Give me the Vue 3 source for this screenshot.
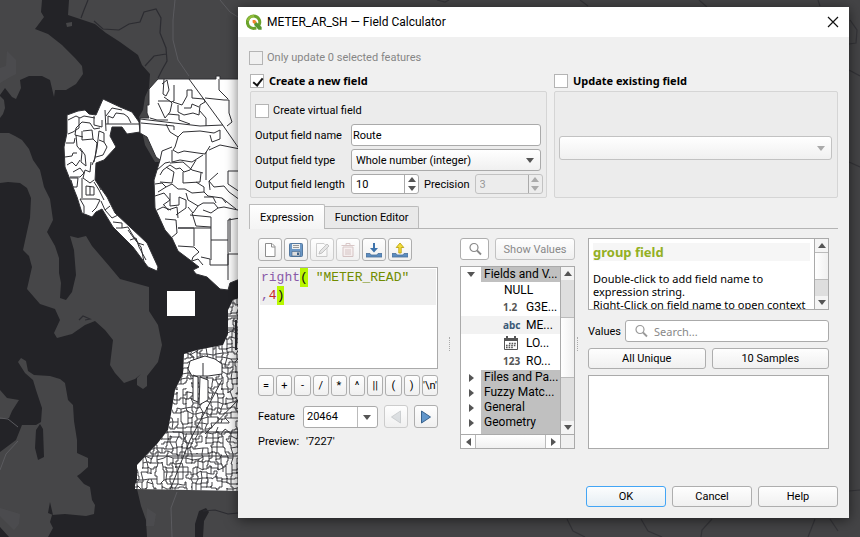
<script setup>
import { ref, computed } from 'vue'

const createNew = ref(true)
const virtual = ref(false)
const updateExisting = ref(false)
const fieldName = ref('Route')
const fieldType = ref('Whole number (integer)')
const fieldLength = ref(10)
const precision = ref(3)
const feature = ref('20464')
const tab = ref('expression')
const expression = ref('right( "METER_READ"\n,4)')
const valueSearch = ref('')

const operators = ['=', '+', '-', '/', '*', '^', '||', '(', ')', "'\\n'"]

const treeRows = [
  { label: 'Fields and V...', kind: 'branch', open: true },
  { label: 'NULL', kind: 'null' },
  { label: 'G3E...', kind: 'leaf', badge: '1.2' },
  { label: 'ME...', kind: 'leaf', badge: 'abc', active: true },
  { label: 'LO...', kind: 'leaf', badge: 'date' },
  { label: 'RO...', kind: 'leaf', badge: '123' },
  { label: 'Files and Pa...', kind: 'branch' },
  { label: 'Fuzzy Matc...', kind: 'branch' },
  { label: 'General', kind: 'branch' },
  { label: 'Geometry', kind: 'branch' }
]

/* Splits the expression into coloured pieces. */
const tokens = computed(() => {
  const parts = expression.value.match(/"[^"]*"|[A-Za-z_]+|\d+|[()]|[\s\S]/g) || []
  return parts.map((text) => {
    let type = 'plain'
    if (/^"/.test(text)) type = 'column'
    else if (/^[A-Za-z_]/.test(text)) type = 'func'
    else if (/^\d/.test(text)) type = 'number'
    else if (/^[()]/.test(text)) type = 'brace'
    return { text, type }
  })
})

/* Outlines of the three parcel areas. */
const island = 'M67 115L78 111L85 110L89 114L96 115L103 99L120 107L132 112L139 122L140 132L127 134L122 127L112 127L110 136L116 147L104 160L96 163L95 180L107 197L115 213L130 227L147 243L158 267L157 271L148 267L133 247L113 227L102 209L96 212L92 217L82 213L77 197L65 167L64 147L67 133Z'
const north = 'M158 79L216 79V76H220V79H240V279L230 283L228 290L220 289L207 277L196 274L193 270L199 267L190 260L178 251L172 238L165 230L155 208L154 180L160 160L156 157L147 137L140 133V118H149L147 113V105H149V89Z'
const south = 'M184 354L197 350L223 345L228 334V310L233 300L240 298V491L135 489V485L137 480V465L157 444L168 430L171 414L175 390L183 374Z'

/* Irregular parcel mesh: a jittered grid whose edges step or bend. */
function mesh(x0, y0, x1, y1, size, drop, seed) {
  let s = seed
  const rnd = () => {
    s = (s * 1664525 + 1013904223) % 4294967296
    return s / 4294967296
  }
  const cols = Math.ceil((x1 - x0) / size)
  const rows = Math.ceil((y1 - y0) / size)
  const pts = []
  for (let r = 0; r <= rows; r++) {
    pts.push([])
    for (let c = 0; c <= cols; c++) {
      pts[r].push([
        Math.round(x0 + c * size + (rnd() - 0.5) * size * 0.7),
        Math.round(y0 + r * size + (rnd() - 0.5) * size * 0.7)
      ])
    }
  }
  let d = ''
  const edge = (a, b) => {
    if (rnd() < drop) return
    const k = rnd()
    d += `M${a[0]} ${a[1]}`
    if (k < 0.35) {
      const m = Math.round((a[0] + b[0]) / 2)
      d += `H${m}V${b[1]}H${b[0]}`
    } else if (k < 0.7) {
      const m = Math.round((a[1] + b[1]) / 2)
      d += `V${m}H${b[0]}V${b[1]}`
    } else {
      d += `L${b[0]} ${b[1]}`
    }
  }
  for (let r = 0; r <= rows; r++) {
    for (let c = 0; c <= cols; c++) {
      if (c < cols) edge(pts[r][c], pts[r][c + 1])
      if (r < rows) edge(pts[r][c], pts[r + 1][c])
    }
  }
  return d
}

const southMesh = mesh(132, 298, 242, 494, 5, 0.2, 73)
</script>

<template>
  <div class="desktop">
    <svg class="map" viewBox="0 0 860 537" preserveAspectRatio="xMinYMin slice" aria-hidden="true">
      <defs>
        <clipPath id="island"><path :d="island" /></clipPath>
        <clipPath id="north"><path :d="north" /></clipPath>
        <clipPath id="south"><path :d="south" /></clipPath>
      </defs>
      <rect width="860" height="537" fill="#444446" />
      <rect width="240" height="537" fill="#232327" />
      <g fill="#464648">
        <path d="M0 0H42L41 12L44 17L35 29L48 34L62 45L75 58L82 66L83 74L76 84L66 90H55L54 97L50 80L42 76L29 76L20 80L21 88L16 99L12 97L5 88L0 95Z" />
        <path d="M0 96L4 100L5 108L3 114L0 118Z" />
        <path d="M69 0L68 15L80 19L95 24L106 33L120 42L138 55L142 65L150 74L149 88L145 97L143 110L139 117L145 145L155 162H240V0Z" />
        <path d="M0 133H9L15 136L22 140L29 149L33 160L40 170L44 187L50 199L53 220L47 232L55 246L59 258L59 273L61 283L60 298L66 300L72 292L76 275L74 250L70 236L78 238L86 236L92 246L110 267L120 279L149 287V311L158 325L162 345L158 362L147 376L147 386L143 389L137 385V378L141 374L135 379L124 383L115 373L110 365L113 340L105 330L95 321L85 325L72 334L57 338L54 333L60 320L55 309L40 304L27 289L32 267L29 256L23 250L30 218L31 198L27 188L20 183L8 182L0 183Z" />
        <path d="M18 362L21 358L26 361L28 371L34 375L50 376L60 379L65 383L68 400L73 405L74 421L77 440V453L88 458V467L80 474L77 476L84 484L90 487L92 500L95 505L94 514L86 516L65 514L52 515L50 522L53 528L48 537H9L0 527V452L16 440L22 425H36L41 422L42 408L36 390L33 380L25 373Z" />
        <path d="M0 390L7 398L19 400L12 411L9 418L0 419Z" />
        <path d="M137 489L240 491V537H147L146 520L141 506Z" />
        <path d="M66 23L72 22V26L67 27Z" />
      </g>
      <path d="M40 424L43 429L44 457L38 460L35 448L36 430ZM50 502L53 515L48 513ZM199 511L206 508L209 512L204 521L203 537H195V524Z" fill="#232327" />
      <path d="M0 68L6 66L7 51L16 60V74L10 77L0 83ZM0 508L20 514L19 524L14 530L0 516ZM147 508L156 514L154 526H146Z" fill="#505053" opacity=".55" />
      <g fill="none" stroke="#2c2c31" stroke-width="1.2">
        <path d="M88 0L84 10L81 18M94 21L103 29L119 30L129 24L140 22L144 12L156 9L161 18L160 33L166 48L167 61L162 70L158 78M166 54L154 56L145 66M79 320L83 316L90 319L85 320M203 511L215 510L228 514L238 513" />
      </g>
      <path d="M175 0L173 20L173 40L178 60L189 76M0 418L8 419L18 427M0 470L6 454L18 441M177 492L171 508L172 537M220 0L230 12L238 17" fill="none" stroke="#5b5b5f" />
      <g fill="none" stroke="#343438" stroke-width="1.2">
        <path d="M567 519L573 531L585 537M641 519L648 531L662 537M712 519L702 530L701 537M815 519L808 537M830 519L838 531M850 20L857 30L856 43L849 44M849 70L860 76M849 162L860 167M849 491L860 490M580 0L588 6M699 0L707 7M818 0L820 6M437 0L445 2L449 0" />
      </g>

      <path fill="#fff" :d="island" stroke="#303034" />
      <path fill="#fff" :d="north" stroke="#303034" />
      <path fill="#fff" :d="south" />
      <path fill="#fff" d="M167 291H195V316H167Z" />

      <g fill="none" stroke="#303034">
        <path clip-path="url(#south)" :d="southMesh" stroke-width=".9" />
        <g clip-path="url(#island)">
          <path d="M68 120L76 116L80 118L84 116L95 118M79 118V128L73 132L68 134M94 116V125L102 127V120M105 110L106 131M108 124V116L113 118L116 113L124 114L128 117L131 123M106 116L112 108L122 110M76 128L82 122L90 123L94 129L100 128M83 131L92 130L93 139L82 140V131M76 128L75 135L83 137M66 143H74L75 138M76 135L77 146L82 152L81 162L86 166L85 155L80 148M65 157L72 156L73 153H77M93 139L97 143L95 158L92 165M99 131L97 148L94 162M99 131L104 133V142L99 140M104 142L107 147L103 155L96 157M106 124H140" />
          <path d="M67 165L72 162L76 166L80 160M73 172L80 168L84 173L80 177H70M91 162L90 172L85 170L83 178L90 183L94 180M70 178L78 178L77 187H73L71 180M82 178V198M86 195V186L94 187V195H86M90 186V195M80 199H96L100 200L96 208L92 212M80 199L84 206L84 213M94 182L99 190L104 200M98 184L101 190M101 201L105 210L110 206M105 210L112 218L118 215M113 222L122 223V228H116M122 228L128 227L132 234L138 243L144 245M130 240L136 238L139 247L146 260M128 230L133 237L141 247L144 262" />
        </g>
        <g clip-path="url(#north)">
          <path d="M189 79L222 124L240 150M140 119L174 123L200 126L223 125M141 123L174 126V130M164 79L163 94L166 96L169 90L167 80L162 84M174 85V101L171 102L164 97M158 101H170L172 103L170 112L165 118L158 103M173 102L182 105L187 96V90H192V98L204 99L205 102L200 105L199 115L193 113L184 115L178 112V105M168 114L179 115V120L190 124M184 108H191L192 104L199 107M199 110L206 118L206 126M205 98L224 100H229V113L232 122L227 126M219 79V90L228 99M150 118L157 120H168M166 124L170 132L178 137L175 147L173 150L178 153L184 151L205 154L210 146M178 137L183 132L200 131L214 133L220 130V139L212 142L210 135M209 150L220 145L240 149M160 160L162 151L172 147M172 150V162L180 160L192 162L203 155" />
          <path d="M157 170L165 163L170 162M160 175L163 170L170 165L176 169L180 168L184 172L190 170L193 165L196 160M170 163L183 162L192 170L203 173M183 172V183L200 182L201 173M166 167L174 172L172 183L160 182M155 184L162 183L166 187L158 192M166 187L172 184L178 189H185L192 193L204 192V187L196 182M155 196L164 193L170 200L163 205M170 193V206L179 205V197L186 200V208L176 215M164 205L168 210L177 207M177 207L178 218M186 193L188 200L198 206L193 213L188 207M198 206L203 203H214L218 208L211 213L203 210M204 192L208 196L222 198L226 203M204 197H213L216 203M209 181L214 187L224 186L229 192L240 200M218 208L224 207L238 210M222 198L236 209M190 215L211 217M192 213L196 226L211 227M211 217V240M157 210L163 207L171 210" />
          <path d="M206 152V180M218 173L209 181L210 190M228 171V184L240 192M228 171H240M178 228H194V246M165 219L176 220L177 233L171 238M211 240L228 240M178 246L194 247L199 252L193 257L191 263M211 240V260M228 240V254H240M228 240V220L240 218M178 228H211M201 257L210 259V265H228V254M192 261L198 259L203 265M230 218V252M228 254V280" />
        </g>
      </g>
      <g clip-path="url(#south)">
        <path d="M190 361L205 356L215 359L222 364V374L208 376H192L188 369ZM193 375L198 377V402L193 400ZM200 377L208 380V400L199 405Z" fill="#fff" stroke="#303034" />
        <path d="M135 432H240M137 456H240M203 363V376M228 330H240M228 316H240M222 380L190 440L170 490M240 398L205 434" fill="none" stroke="#303034" />
        <path d="M236 320V350" fill="none" stroke="#303034" stroke-width="2" />
      </g>
    </svg>

    <main class="dialog" role="dialog" aria-labelledby="dialog-title">
      <header class="titlebar">
        <svg class="logo" viewBox="0 0 16 16" aria-hidden="true">
          <path d="M12.6 11.8A6.2 6.2 0 1 0 10.2 13.8" fill="none" stroke="#6ba32c" stroke-width="3" />
          <path d="M2 7A6 6 0 0 1 8 2" fill="none" stroke="#93bd3b" stroke-width="2.4" />
          <path d="M8.2 8.2H10.6L15.6 13V15.8H12.5L8.2 11Z" fill="#589632" />
          <path d="M6.6 6H9L10.6 7.8L8.4 10L6.6 8.4Z" fill="#f0862f" />
        </svg>
        <h1 id="dialog-title">METER_AR_SH — Field Calculator</h1>
        <button class="close" type="button" aria-label="Close">
          <svg viewBox="0 0 12 12"><path d="M1 1L11 11M11 1L1 11" fill="none" stroke="#111" stroke-width="1.2" /></svg>
        </button>
      </header>

      <form class="content" @submit.prevent>
        <label class="check muted"><input type="checkbox" disabled />Only update 0 selected features</label>

        <div class="groups">
          <section class="group">
            <label class="check strong"><input v-model="createNew" type="checkbox" />Create a new field</label>
            <div class="panel fields">
              <label class="check wide"><input v-model="virtual" type="checkbox" />Create virtual field</label>
              <label for="out-name">Output field name</label>
              <input id="out-name" v-model="fieldName" class="box" type="text" />
              <label for="out-type">Output field type</label>
              <span class="select">
                <select id="out-type" v-model="fieldType" class="box"><option>Whole number (integer)</option></select>
              </span>
              <label for="out-length">Output field length</label>
              <div class="numbers">
                <span class="spin">
                  <input id="out-length" v-model="fieldLength" type="number" />
                  <span class="steps">
                    <button type="button" aria-label="Increase length" @click="fieldLength++"><i class="tri up"></i></button>
                    <button type="button" aria-label="Decrease length" @click="fieldLength--"><i class="tri down"></i></button>
                  </span>
                </span>
                <label for="out-precision">Precision</label>
                <span class="spin off">
                  <input id="out-precision" v-model="precision" type="number" disabled />
                  <span class="steps">
                    <button type="button" aria-label="Increase precision" disabled><i class="tri up"></i></button>
                    <button type="button" aria-label="Decrease precision" disabled><i class="tri down"></i></button>
                  </span>
                </span>
              </div>
            </div>
          </section>
          <section class="group">
            <label class="check strong"><input v-model="updateExisting" type="checkbox" />Update existing field</label>
            <div class="panel existing">
              <span class="select off"><select class="box" disabled aria-label="Existing field"></select></span>
            </div>
          </section>
        </div>

        <nav class="tabs">
          <button type="button" :class="{ current: tab === 'expression' }" @click="tab = 'expression'">Expression</button>
          <button type="button" :class="{ current: tab === 'editor' }" @click="tab = 'editor'">Function Editor</button>
        </nav>

        <div class="workspace">
          <section class="pane">
            <div class="tools">
              <button type="button" aria-label="New expression">
                <svg viewBox="0 0 16 16"><path d="M3.5 1.5H10L13 4.5V14.5H3.5Z" fill="#fff" stroke="#8d8d8d" /><path d="M9.5 1.5V5H13" fill="none" stroke="#8d8d8d" /></svg>
              </button>
              <button type="button" aria-label="Save expression">
                <svg viewBox="0 0 16 16"><rect x="1.5" y="1.5" width="13" height="13" rx="1" fill="#6c98c6" stroke="#55799f" /><path d="M4 2H12V7H4Z" fill="#eef0f0" /><path d="M5 3.5H11M5 5.5H11" stroke="#999" /><path d="M4 9.5H12V14H4Z" fill="#ddd" stroke="#3f6288" stroke-width=".6" /><path d="M9 10.5H11V13H9Z" fill="#3f6288" /></svg>
              </button>
              <button type="button" class="faded" aria-label="Edit expression" disabled>
                <svg viewBox="0 0 16 16"><path d="M2.5 1.5H10L13 4.5V14.5H2.5Z" fill="#fff" stroke="#8d8d8d" /><path d="M5 12L6 9L13 2L15 4L8 11Z" fill="#ccc" stroke="#777" /></svg>
              </button>
              <button type="button" class="faded" aria-label="Delete expression" disabled>
                <svg viewBox="0 0 16 16"><path d="M3 5H13V14.5H3Z" fill="#f7e6e6" stroke="#a87c7c" /><path d="M1.5 3.5H14.5M6 3V1.5H10V3M6 7V13M8 7V13M10 7V13" fill="none" stroke="#a87c7c" /></svg>
              </button>
              <button type="button" aria-label="Import expressions">
                <svg viewBox="0 0 16 16"><path d="M0 11.5H4L5 13H11L12 11.5H16V15H0Z" fill="#5b8cc0" stroke="#4a6f98" stroke-width=".8" /><path d="M7 1H9V6H12L8 10.5L4 6H7Z" fill="#3d72ab" /></svg>
              </button>
              <button type="button" aria-label="Export expressions">
                <svg viewBox="0 0 16 16"><path d="M0 11.5H4L5 13H11L12 11.5H16V15H0Z" fill="#5b8cc0" stroke="#4a6f98" stroke-width=".8" /><path d="M6.8 11V5.5H4.2L8 1L11.8 5.5H9.2V11Z" fill="#f3dd3c" stroke="#b59b00" stroke-width=".8" /></svg>
              </button>
            </div>
            <div class="editor">
              <pre aria-hidden="true"><span v-for="(t, i) in tokens" :key="i" :class="t.type">{{ t.text }}</span></pre>
              <textarea v-model="expression" aria-label="Expression" spellcheck="false"></textarea>
            </div>
            <div class="operators">
              <button v-for="op in operators" :key="op" type="button" @click="expression += op">{{ op }}</button>
            </div>
            <div class="feature">
              <label for="feature">Feature</label>
              <span class="select split">
                <select id="feature" v-model="feature" class="box"><option>20464</option></select>
              </span>
              <button type="button" class="faded" aria-label="Previous feature" disabled>
                <svg viewBox="0 0 16 16"><path d="M12.5 2V14L3.5 8Z" fill="#b4bcc2" stroke="#8d9499" /></svg>
              </button>
              <button type="button" aria-label="Next feature">
                <svg viewBox="0 0 16 16"><path d="M3.5 2V14L12.5 8Z" fill="#6196cb" stroke="#36618c" /></svg>
              </button>
            </div>
            <p class="preview"><span>Preview:</span><output>'7227'</output></p>
          </section>

          <i class="grip"></i>

          <section class="pane">
            <div class="finder">
              <button type="button" class="lens" aria-label="Search functions">
                <svg viewBox="0 0 14 14"><circle cx="6" cy="5.5" r="4" fill="none" stroke="#888" stroke-width="1.2" /><path d="M9 8.5L13 12.5" stroke="#888" stroke-width="1.8" /></svg>
              </button>
              <button type="button" class="show" disabled>Show Values</button>
            </div>
            <div class="tree">
              <ul>
                <li v-for="row in treeRows" :key="row.label" :class="[row.kind, { active: row.active }]">
                  <i v-if="row.kind === 'branch'" class="tri" :class="row.open ? 'down' : 'right'"></i>
                  <svg v-if="row.badge === 'date'" class="badge" viewBox="0 0 16 14">
                    <path d="M1.5 2.5H14.5V13.5H1.5Z" fill="#fff" stroke="#555" /><path d="M1 2H15V5H1Z" fill="#555" /><path d="M4 0V3M12 0V3" stroke="#555" stroke-width="2" /><path d="M6 7.5H13M3 9.5H13M3 11.5H10" stroke="#555" stroke-width="1.4" stroke-dasharray="1.6 1" />
                  </svg>
                  <b v-else-if="row.badge" class="badge" :class="{ text: row.badge === 'abc' }">{{ row.badge }}</b>
                  <span>{{ row.label }}</span>
                </li>
              </ul>
              <div class="vbar">
                <button type="button" aria-label="Scroll up"><i class="tri up"></i></button>
                <span class="track above"></span><span class="thumb"></span><span class="track below"></span>
                <button type="button" aria-label="Scroll down"><i class="tri down"></i></button>
              </div>
              <div class="hbar">
                <button type="button" aria-label="Scroll left"><i class="tri left"></i></button>
                <span class="thumb"></span>
                <button type="button" aria-label="Scroll right"><i class="tri right"></i></button>
              </div>
              <span class="corner"></span>
            </div>
          </section>

          <i class="grip"></i>

          <section class="pane last-pane">
            <div class="help">
              <article>
                <h2>group field</h2>
                <p>Double-click to add field name to expression string.<br />Right-Click on field name to open context</p>
              </article>
              <div class="vbar">
                <button type="button" aria-label="Scroll help up"><i class="tri up"></i></button>
                <span class="thumb"></span><span class="track last"></span>
                <button type="button" aria-label="Scroll help down"><i class="tri down"></i></button>
              </div>
            </div>
            <div class="values">
              <label for="values">Values</label>
              <span class="search">
                <svg viewBox="0 0 14 14"><circle cx="6" cy="5.5" r="4" fill="none" stroke="#999" stroke-width="1.2" /><path d="M9 8.5L13 12.5" stroke="#999" stroke-width="1.8" /></svg>
                <input id="values" v-model="valueSearch" type="text" placeholder="Search..." />
              </span>
            </div>
            <div class="pair">
              <button type="button">All Unique</button>
              <button type="button">10 Samples</button>
            </div>
            <div class="list"></div>
          </section>
        </div>

        <footer>
          <button type="submit" class="primary">OK</button>
          <button type="button">Cancel</button>
          <button type="button">Help</button>
        </footer>
      </form>
    </main>
  </div>
</template>

<style>
body {
  background: #444446;
}
</style>

<style scoped>
* {
  box-sizing: border-box;
}
.desktop {
  position: relative;
  display: grid;
  align-items: start;
  min-height: 100vh;
  padding: 7px 11px 19px 238px;
  overflow: hidden;
  font: 11px/15px Roboto, "Noto Sans", sans-serif;
  color: #000;
}
.map {
  position: absolute;
  inset: 0;
  width: 100%;
  height: 100%;
}
.dialog {
  position: relative;
  background: #f0f0f0;
  box-shadow: 0 2px 12px rgba(0, 0, 0, 0.55);
}
.titlebar {
  display: flex;
  align-items: center;
  gap: 5px;
  height: 30px;
  padding: 0 8px;
  background: #fff;
}
.logo {
  width: 16px;
  height: 16px;
}
h1 {
  flex: 1;
  margin: 0;
  font-size: 12px;
  font-weight: 400;
}
button,
input,
select,
textarea {
  margin: 0;
  font: inherit;
  color: inherit;
}
label {
  white-space: nowrap;
}
button {
  display: flex;
  align-items: center;
  justify-content: center;
  padding: 0;
  border: 1px solid #aeaeae;
  border-radius: 3px;
  background: linear-gradient(#fefefe, #f0f0f0);
}
.close {
  width: 16px;
  height: 16px;
  border: 0;
  background: none;
}
.close svg {
  width: 12px;
  height: 12px;
}
.content {
  display: flex;
  flex-direction: column;
  padding: 13px 11px 11px;
}
.check {
  display: flex;
  align-items: center;
  gap: 4px;
}
.check input {
  appearance: none;
  flex: none;
  width: 14px;
  height: 14px;
  border: 1px solid #b4b4b4;
  background: #fff;
}
.check input:disabled {
  background: #f0f0f0;
}
.check input:checked::after {
  content: "";
  display: block;
  width: 4px;
  height: 8px;
  margin: 1px 4px;
  border: solid #111;
  border-width: 0 2px 2px 0;
  transform: rotate(38deg);
}
.muted {
  color: #868686;
}
.strong {
  gap: 5px;
  font-family: "Noto Sans", sans-serif;
  font-weight: 700;
}
.groups {
  display: grid;
  grid-template-columns: minmax(0, 297fr) minmax(0, 284fr);
  gap: 7px;
  margin-top: 8px;
  padding-left: 1px;
}
.group {
  display: flex;
  flex-direction: column;
  gap: 3px;
}
.panel {
  flex: 1;
  border: 1px solid #d5d5d5;
  border-radius: 2px;
  background: #ececec;
}
.fields {
  display: grid;
  grid-template-columns: 92px minmax(0, 1fr);
  align-items: center;
  gap: 3px 4px;
  padding: 11px 5px 3px 4px;
}
.wide {
  grid-column: 1 / -1;
  margin-bottom: 3px;
}
.existing {
  display: grid;
  align-items: center;
  padding: 10px 5px 4px 4px;
}
.box {
  width: 100%;
  height: 22px;
  padding: 0 3px;
  border: 1px solid #aaa;
  border-radius: 3px;
  background: #fff;
}
input.box {
  padding: 0 1px;
}
select.box {
  appearance: none;
  display: block;
  padding: 0 22px 0 4px;
  background: linear-gradient(#fff, #f0f0f0);
  opacity: 1;
}
.existing .box {
  height: 24px;
  border-color: #c2c2c2;
}
.select {
  position: relative;
  display: block;
}
.select::after {
  content: "";
  position: absolute;
  right: 7px;
  top: calc(50% - 2px);
  border: 4px solid transparent;
  border-top: 5px solid #555;
  border-bottom: 0;
}
.select.off::after {
  border-top-color: #aaa;
}
.numbers {
  display: grid;
  grid-template-columns: 68px 1fr 68px;
  align-items: center;
  gap: 5px;
}
.spin {
  display: flex;
  height: 20px;
  border: 1px solid #aaa;
  border-radius: 3px;
  background: #fff;
}
.spin input {
  appearance: textfield;
  width: 100%;
  min-width: 0;
  padding: 0 4px;
  border: 0;
  background: none;
}
.spin input::-webkit-inner-spin-button {
  appearance: none;
}
.steps {
  display: grid;
  flex: none;
  width: 14px;
  border-left: 1px solid #aaa;
}
.steps button,
.vbar button,
.hbar button {
  border: 0;
  border-radius: 0;
  background: none;
}
.off {
  border-color: #c2c2c2;
  color: #999;
}
.spin.off {
  background: #ececec;
}
.tri {
  border: 4px solid transparent;
}
.up {
  border-bottom: 5px solid #555;
  border-top: 0;
}
.down {
  border-top: 5px solid #555;
  border-bottom: 0;
}
.left {
  border-right: 5px solid #555;
  border-left: 0;
}
.right {
  border-left: 5px solid #555;
  border-right: 0;
}
.off .up {
  border-bottom-color: #aaa;
}
.off .down {
  border-top-color: #aaa;
}
.tabs {
  display: flex;
  align-items: flex-end;
  height: 25px;
  margin-top: 6px;
  border-bottom: 1px solid #b4b4b4;
}
.tabs button {
  height: 22px;
  padding: 0 10px;
  border: 1px solid #bbb;
  border-left: 0;
  border-bottom: 0;
  border-radius: 0 2px 0 0;
  background: #e9e9e9;
}
.tabs .current {
  height: 25px;
  margin-bottom: -1px;
  border-left: 1px solid #bbb;
  background: linear-gradient(#fff, #f4f4f4);
}
.workspace {
  display: grid;
  grid-template-columns: 180px 22px 115px 5px 1fr;
  height: 208px;
  margin-top: 9px;
  padding: 0 9px;
}
.pane {
  display: flex;
  flex-direction: column;
  gap: 6px;
  min-width: 0;
}
.last-pane {
  padding-left: 8px;
}
.tools {
  display: flex;
  gap: 2px;
}
.tools button,
.feature button {
  width: 24px;
  height: 23px;
}
.tools svg,
.feature svg {
  width: 16px;
  height: 16px;
}
.faded {
  border-color: #ccc;
}
.faded svg {
  opacity: 0.4;
}
.editor {
  display: grid;
  height: 102px;
  padding: 1px;
  border: 1px solid #aaa;
  background: #fff;
  font: 13px/18px "Liberation Mono", monospace;
}
.editor pre,
.editor textarea {
  grid-area: 1 / 1;
  margin: 0;
  padding: 0 1px;
  border: 0;
  font: inherit;
  white-space: pre-wrap;
}
.editor pre {
  align-self: start;
  background: #efefef;
}
.editor textarea {
  resize: none;
  background: none;
  color: transparent;
  caret-color: #111;
  outline: 0;
}
.func,
.plain {
  color: #8959a8;
}
.column {
  color: #718c00;
}
.number {
  color: #c82829;
}
.brace {
  padding: 2px 0;
  background: #b8f700;
  color: #111;
}
.operators {
  display: grid;
  grid-template-columns: repeat(10, 1fr);
  gap: 2px;
}
.operators button {
  height: 21px;
  min-width: 0;
}
.feature {
  display: grid;
  grid-template-columns: 39px 75px 24px 24px;
  align-items: center;
  gap: 6px;
  margin-top: 3px;
}
.feature .box {
  background: #fff;
  padding-left: 3px;
}
.split::before {
  content: "";
  position: absolute;
  right: 20px;
  top: 1px;
  bottom: 1px;
  border-left: 1px solid #bbb;
}
.preview {
  display: flex;
  gap: 7px;
  margin: 0;
}
.grip {
  align-self: center;
  justify-self: center;
  height: 14px;
  border-left: 1px dotted #aaa;
}
.finder {
  display: grid;
  grid-template-columns: 29px 1fr;
  gap: 6px;
}
.finder button {
  height: 22px;
}
.lens {
  background: #fff;
}
.lens svg,
.search svg {
  width: 14px;
  height: 14px;
}
.show {
  border-color: #c2c2c2;
  color: #888;
}
.tree {
  display: grid;
  grid-template: 1fr 14px / 1fr 14px;
  flex: 1;
  min-height: 0;
  border: 1px solid #aaa;
  background: #fff;
}
ul {
  min-width: 0;
  margin: 0;
  padding: 0;
  overflow: hidden;
  list-style: none;
  background: linear-gradient(90deg, #fff 20px, #c0c0c0 20px) bottom / 100% 4px no-repeat;
}
li {
  display: grid;
  align-items: center;
  height: 18px;
  white-space: nowrap;
  font-size: 12px;
}
li .tri {
  justify-self: center;
}
.branch {
  grid-template-columns: 20px 1fr;
  height: 15px;
}
.branch span {
  padding-left: 3px;
  background: #c0c0c0;
}
.null {
  height: 16px;
  padding-left: 43px;
}
.leaf {
  grid-template-columns: 16px 1fr;
  gap: 7px;
  padding-left: 42px;
}
.active {
  background: #f2f2f2;
}
b.badge {
  font-family: "Noto Sans", sans-serif;
  font-size: 10px;
  color: #555;
}
b.text {
  color: #3c5a78;
}
svg.badge {
  width: 16px;
  height: 14px;
}
.vbar {
  display: flex;
  flex-direction: column;
  width: 14px;
  border-left: 1px solid #aaa;
  background: #f4f4f4;
}
.vbar button {
  height: 13px;
}
.vbar .track {
  background: #dedede;
}
.above {
  height: 37px;
}
.below {
  height: 43px;
}
.last {
  height: 16px;
}
.vbar .thumb {
  flex: 1;
  border: solid #bbb;
  border-width: 1px 0;
  background: linear-gradient(90deg, #fff, #f0f0f0);
}
.hbar {
  display: grid;
  grid-template-columns: 14px 1fr 14px;
  border-top: 1px solid #aaa;
}
.hbar .thumb {
  border: solid #bbb;
  border-width: 0 1px;
  background: linear-gradient(#fff, #f0f0f0);
}
.corner {
  border: solid #aaa;
  border-width: 1px 0 0 1px;
  background: #f0f0f0;
}
.help {
  display: grid;
  grid-template-columns: 1fr 14px;
  height: 72px;
  border: 1px solid #aaa;
  background: #fff;
  font-family: "Noto Sans", sans-serif;
}
article {
  height: 70px;
  padding: 4px 4px 0;
  overflow: hidden;
}
h2 {
  margin: 0;
  background: #f6f6f6;
  font-size: 13px;
  line-height: 18px;
  color: #93b023;
}
article p {
  margin: 11px 0 0;
  line-height: 13px;
}
.values {
  display: grid;
  grid-template-columns: 33px 1fr;
  align-items: center;
  gap: 4px;
  margin-top: 4px;
}
.search {
  display: flex;
  align-items: center;
  gap: 6px;
  height: 22px;
  padding: 0 8px;
  border: 1px solid #aaa;
  border-radius: 3px;
  background: #fff;
}
.search input {
  flex: 1;
  min-width: 0;
  padding: 0;
  border: 0;
  background: none;
  outline: 0;
  font-family: "Noto Sans", sans-serif;
}
.search input::placeholder {
  color: #888;
}
.pair {
  display: grid;
  grid-template-columns: 1fr 1fr;
  gap: 6px;
}
.pair button {
  height: 21px;
}
.list {
  flex: 1;
  border: 1px solid #aaa;
  background: #fff;
}
footer {
  display: flex;
  justify-content: flex-end;
  gap: 6px;
  margin-top: 40px;
}
footer button {
  width: 80px;
  height: 21px;
}
footer .primary {
  border-color: #43a5f5;
  background: linear-gradient(#fcfdfe, #e6eef3);
}
</style>
